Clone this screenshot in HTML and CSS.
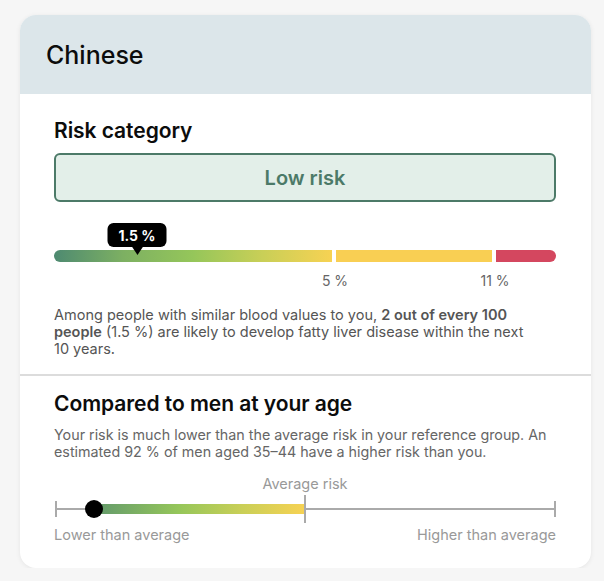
FILE: index.html
```html
<!DOCTYPE html>
<html lang="en">
<head>
<meta charset="utf-8">
<title>Chinese risk</title>
<link rel="stylesheet" href="styles.css">
</head>
<body>
<div class="card">
  <div class="card-header"><h2 class="card-title">Chinese</h2></div>
  <section class="section section-risk">
    <h3 class="section-title">Risk category</h3>
    <div class="risk-box">Low risk</div>
    <div class="bar-wrap">
      <div class="tooltip" style="left:83px">1.5 %</div>
      <div class="bar">
        <div class="seg seg-low"></div>
        <div class="seg seg-mid"></div>
        <div class="seg seg-high"></div>
      </div>
      <div class="bar-labels">
        <span class="bar-label" style="left:281px">5 %</span>
        <span class="bar-label" style="left:441px">11 %</span>
      </div>
    </div>
    <p class="text">Among people with similar blood values to you, <strong>2 out of every 100 people</strong> (1.5&nbsp;%) are likely to develop fatty liver disease within the next 10&nbsp;years.</p>
  </section>
  <div class="divider"></div>
  <section class="section section-compare">
    <h3 class="section-title">Compared to men at your age</h3>
    <p class="text light">Your risk is much lower than the average risk in your reference group. An estimated 92&nbsp;% of men aged 35–44 have a higher risk than you.</p>
    <div class="avg-label">Average risk</div>
    <div class="scale">
      <div class="scale-line"></div>
      <div class="tick tick-start"></div>
      <div class="tick tick-end"></div>
      <div class="scale-fill" style="left:40px;width:211px"></div>
      <div class="tick tick-avg" style="left:250px"></div>
      <div class="dot" style="left:40px"></div>
    </div>
    <div class="scale-labels">
      <span>Lower than average</span>
      <span>Higher than average</span>
    </div>
  </section>
</div>
</body>
</html>
```

FILE: styles.css
```css
* { box-sizing: border-box; }
html, body { margin: 0; padding: 0; }
body {
  background: #f6f6f6;
  font-family: Inter, "Noto Sans", sans-serif;
  color: #111;
  padding: 15px 0 0 20px;
}
.card {
  width: 571px;
  background: #fff;
  border-radius: 16px;
  overflow: hidden;
  box-shadow: 0 1px 5px rgba(0,0,0,0.07);
}
.card-header {
  height: 79px;
  background: #dce6ea;
  display: flex;
  align-items: center;
  padding-left: 26px;
}
.card-title {
  margin: 0;
  font-size: 25px;
  font-weight: 500;
  color: #0c0c0c;
}
.section {
  padding: 0 35px 0 34px;
}
.section-risk {
  padding-top: 25px;
  padding-bottom: 17px;
}
.section-title {
  margin: 0;
  font-size: 21px;
  line-height: 24px;
  font-weight: 600;
  letter-spacing: -0.05px;
  color: #0c0c0c;
}
.risk-box {
  margin-top: 10px;
  height: 49px;
  border: 2px solid #4c7a68;
  border-radius: 6px;
  background: #e3efe9;
  color: #4c7a68;
  font-size: 20px;
  font-weight: 600;
  display: flex;
  align-items: center;
  justify-content: center;
}
.bar-wrap {
  margin-top: 48px;
  position: relative;
}
.bar {
  display: flex;
  gap: 4px;
  height: 12px;
}
.seg { height: 100%; }
.seg-low {
  width: 278px;
  border-radius: 6px 0 0 6px;
  background: linear-gradient(90deg, #4e8a71 0%, #7db062 25%, #95c65a 50%, #c9cf57 75%, #f7d253 100%);
}
.seg-mid {
  width: 156px;
  background: #f9cf53;
}
.seg-high {
  flex: 1;
  border-radius: 0 6px 6px 0;
  background: #d4475f;
}
.tooltip {
  position: absolute;
  top: -27px;
  transform: translateX(-50%);
  width: 59px;
  height: 24px;
  background: #000;
  color: #fff;
  border-radius: 6px;
  font-size: 14px;
  font-weight: 700;
  display: flex;
  align-items: center;
  justify-content: center;
  z-index: 2;
}
.tooltip::after {
  content: "";
  position: absolute;
  left: 50%;
  bottom: -8px;
  transform: translateX(-50%);
  border-left: 6px solid transparent;
  border-right: 6px solid transparent;
  border-top: 9px solid #000;
}
.bar-labels {
  position: relative;
  margin-top: 10px;
  height: 17px;
}
.bar-label {
  position: absolute;
  top: 0;
  transform: translateX(-50%);
  font-size: 14px;
  line-height: 17px;
  color: #666;
}
.text {
  margin: 17px 0 0;
  font-size: 14.5px;
  line-height: 17px;
  color: #555;
}
.text strong { font-weight: 600; color: #555; }
.text.light { margin-top: 10px; color: #666; font-size: 14.3px; }
.divider {
  height: 2px;
  background: #dcdcdc;
}
.section-compare {
  padding-top: 16px;
  padding-bottom: 25px;
}
.avg-label {
  margin-top: 15px;
  text-align: center;
  width: 502px;
  font-size: 14.5px;
  line-height: 17px;
  color: #999;
}
.scale {
  position: relative;
  margin-top: 3px;
  height: 28px;
}
.scale-line {
  position: absolute;
  left: 1px;
  right: 0;
  top: 13px;
  height: 2px;
  background: #aaa;
}
.tick {
  position: absolute;
  width: 2px;
  background: #aaa;
}
.tick-start { left: 1px; top: 6px; height: 16px; }
.tick-end { right: 0; top: 6px; height: 16px; }
.tick-avg { top: 0; height: 28px; }
.scale-fill {
  position: absolute;
  top: 9px;
  height: 10px;
  background: linear-gradient(90deg, #62996c 0%, #95c65a 40%, #c9cf57 70%, #f7d253 100%);
}
.dot {
  position: absolute;
  top: 5px;
  width: 18px;
  height: 18px;
  margin-left: -9px;
  border-radius: 50%;
  background: #000;
}
.scale-labels {
  margin-top: 3px;
  display: flex;
  justify-content: space-between;
  font-size: 14.5px;
  line-height: 17px;
  color: #999;
}
```
